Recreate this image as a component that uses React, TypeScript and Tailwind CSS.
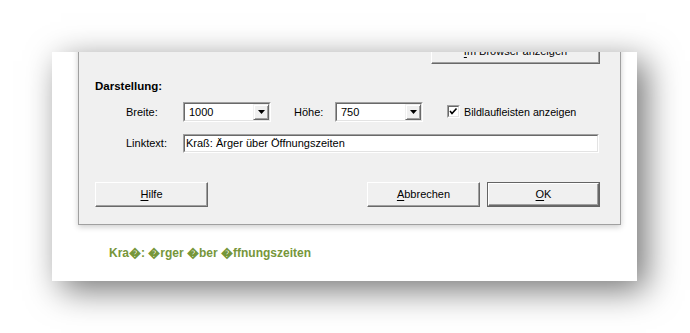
import React from 'react';

const font = { fontFamily: '"Liberation Sans", Arial, sans-serif' };

const Key = ({ children }: { children: React.ReactNode }) => <span className="underline underline-offset-2">{children}</span>;

const Button = ({ children, className = '', primary = false }: { children: React.ReactNode; className?: string; primary?: boolean }) => (
  <div className={`h-[25px] ${primary ? 'border border-[#646464]' : ''} ${className}`}>
    <div className="h-full w-full bg-[#f0f0f0] border border-t-white border-l-white border-r-[#696969] border-b-[#696969] shadow-[inset_-1px_-1px_0_#a0a0a0] flex items-center justify-center text-[11px] text-black">
      {children}
    </div>
  </div>
);

const Sunken = ({ children, className = '' }: { children: React.ReactNode; className?: string }) => (
  <div className={`border border-t-[#a0a0a0] border-l-[#a0a0a0] border-r-white border-b-white ${className}`}>
    <div className="h-full w-full bg-white border border-t-[#696969] border-l-[#696969] border-r-[#e3e3e3] border-b-[#e3e3e3] flex items-center">
      {children}
    </div>
  </div>
);

const Combo = ({ value }: { value: string }) => (
  <Sunken className="w-[88px] h-[20px]">
    <span className="pl-[4px] text-[11px] flex-1">{value}</span>
    <div className="w-[16px] h-full bg-[#f0f0f0] border border-t-[#f0f0f0] border-l-[#f0f0f0] border-r-[#696969] border-b-[#696969] shadow-[inset_1px_1px_0_#fff,inset_-1px_-1px_0_#a0a0a0] flex items-center justify-center">
      <svg width="7" height="4" viewBox="0 0 7 4"><path d="M0 0h7L3.5 4z" fill="#000" /></svg>
    </div>
  </Sunken>
);

export default function App() {
  return (
    <div className="w-[690px] h-[333px] bg-white pt-[52px] pl-[52px] overflow-hidden" style={font}>
      <div className="w-[585px] h-[229px] bg-white overflow-hidden shadow-[9px_9px_32px_rgba(0,0,0,0.55)]">
        <div className="ml-[26px] -mt-[20px] w-[543px] h-[193px] bg-[#f0f0f0] border border-[#a0a0a0] shadow-[0_2px_6px_rgba(0,0,0,0.2)] pt-[6px] pl-[16px] pr-[20px] text-black">
          <div className="flex justify-end">
            <Button className="w-[169px]"><span><Key>I</Key>m Browser anzeigen</span></Button>
          </div>

          <div className="mt-[15px] h-[14px] leading-[14px] text-[11.5px] font-bold">Darstellung:</div>

          <div className="mt-[9px] flex items-center h-[20px] text-[11px]">
            <span className="ml-[31px] w-[57px]">Breite:</span>
            <Combo value="1000" />
            <span className="ml-[23px] w-[41px]">Höhe:</span>
            <Combo value="750" />
            <div className="ml-[24px] flex items-center">
              <Sunken className="w-[13px] h-[13px]">
                <svg width="9" height="9" viewBox="0 0 9 9" className="block">
                  <path d="M1 4l2 2.5L7.5 1.5" fill="none" stroke="#000" strokeWidth="1.6" />
                </svg>
              </Sunken>
              <span className="ml-[4px] text-[10.7px]">Bildlaufleisten anzeigen</span>
            </div>
          </div>

          <div className="mt-[12px] flex items-center h-[19px] text-[11px]">
            <span className="ml-[31px] w-[57px]">Linktext:</span>
            <Sunken className="w-[416px] h-[19px]">
              <span className="pl-[1px]">Kraß: Ärger über Öffnungszeiten</span>
            </Sunken>
          </div>

          <div className="mt-[29px] flex">
            <Button className="w-[113px]"><span><Key>H</Key>ilfe</span></Button>
            <Button className="w-[113px] ml-auto"><span><Key>A</Key>bbrechen</span></Button>
            <Button className="w-[113px] ml-[7px]" primary><span><Key>O</Key>K</span></Button>
          </div>
        </div>

        <div className="mt-[21px] pl-[57px] text-[12px] leading-[15px] font-bold text-[#76963a]">
          Kra�: �rger �ber �ffnungszeiten
        </div>
      </div>
    </div>
  );
}
